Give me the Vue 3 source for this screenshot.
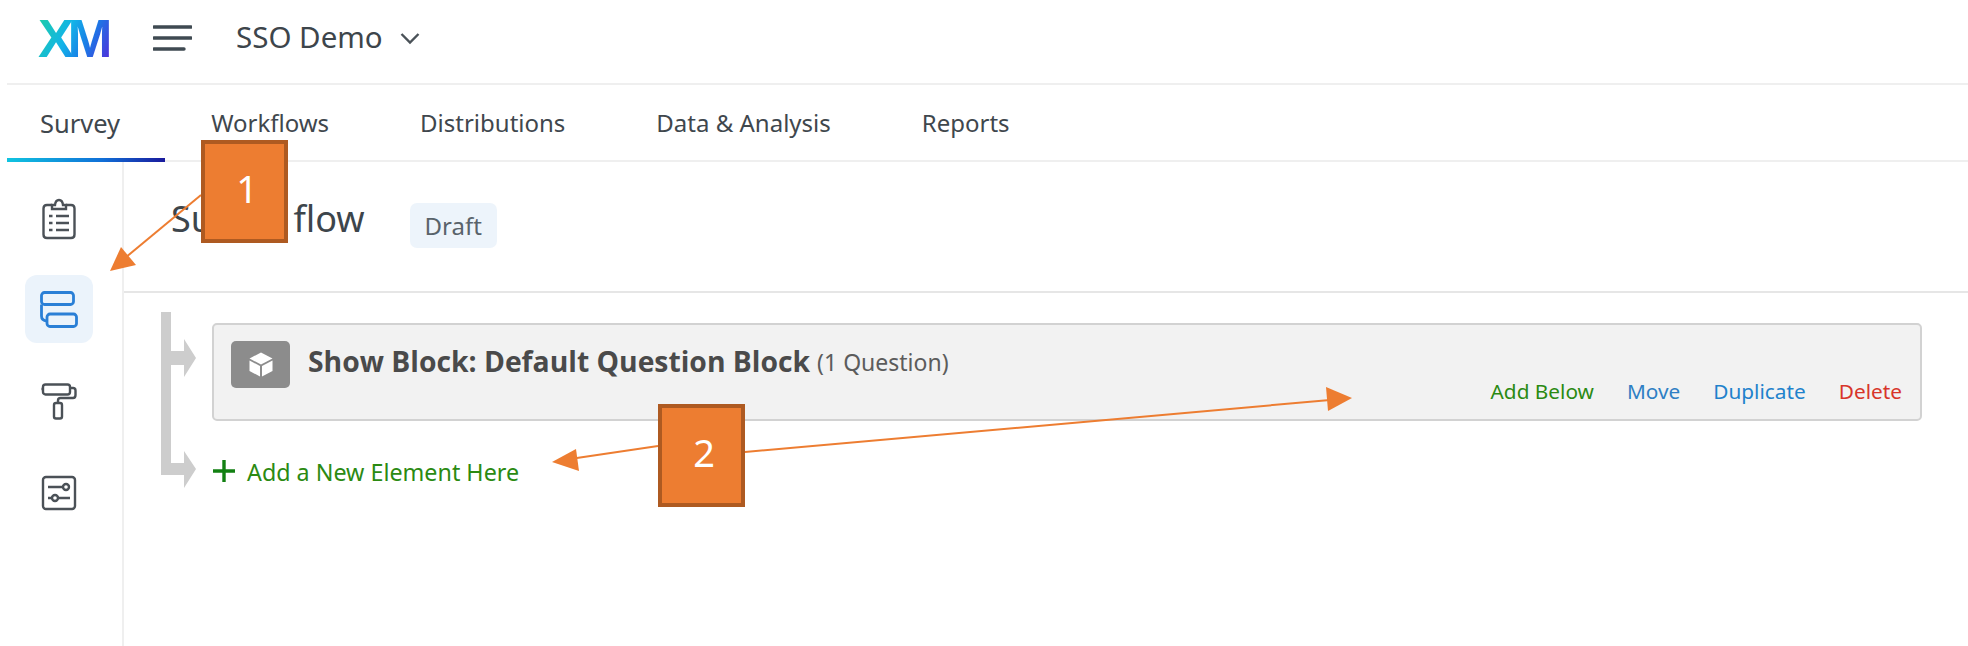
<script setup>
const tabs = ["Survey", "Workflows", "Distributions", "Data & Analysis", "Reports"];
const actions = [
  { label: "Add Below", color: "#2b8a12" },
  { label: "Move", color: "#2f7fc4" },
  { label: "Duplicate", color: "#1f82cc" },
  { label: "Delete", color: "#d8352a" },
];
</script>

<template>
  <div class="page">
    <header class="topbar">
      <span class="logo">XM</span>
      <svg class="menu" width="39" height="28" viewBox="0 0 39 28">
        <path d="M1 3H38M1 14H38M1 25H31" stroke="#3f4a52" stroke-width="3.4" fill="none" stroke-linecap="round" />
      </svg>
      <span class="project">SSO Demo</span>
      <svg class="chevron" width="20" height="13" viewBox="0 0 20 13">
        <path d="M1.5 2L10 10.5L18.5 2" stroke="#4a5258" stroke-width="2.4" fill="none" />
      </svg>
    </header>

    <nav class="tabs">
      <span v-for="(tab, i) in tabs" :key="tab" class="tab" :class="{ active: i === 0 }">{{ tab }}</span>
    </nav>

    <div class="body">
      <aside class="sidebar">
        <div class="side-item">
          <svg class="clipboard" width="34" height="42" viewBox="0 0 34 42" fill="none" stroke="#4b5157" stroke-width="2.4">
            <path d="M10 7H5Q1.500 7 1.500 10.500V36.500Q1.500 40 5 40H29Q32.500 40 32.500 36.500V10.500Q32.500 7 29 7H24" />
            <path d="M10 11V7H13Q13.500 2 17 2Q20.500 2 21 7H24V11Z" />
            <path d="M14 18H27M14 25H27M14 32H27" />
            <path d="M7 18H10.500M7 25H10.500M7 32H10.500" />
          </svg>
        </div>
        <div class="side-item selected">
          <svg width="38" height="37" viewBox="0 0 38 37" fill="none" stroke="#2a7fd6" stroke-width="2.800">
            <rect x="1.500" y="1.500" width="32" height="12" rx="3" />
            <rect x="7" y="23" width="29.500" height="12.500" rx="3" />
            <path d="M1.500 13.500V25Q1.500 29.500 7 30" />
          </svg>
        </div>
        <div class="side-item">
          <svg width="36" height="37" viewBox="0 0 36 37" fill="none" stroke="#4b5157" stroke-width="2.400">
            <rect x="2" y="1.500" width="27" height="10" rx="2.500" />
            <path d="M2 6H0.500M29 5H32Q34.500 5 34.500 7.500V12Q34.500 15 32 15H19.500Q17 15 17 17.500V20" />
            <rect x="13" y="20" width="8" height="15.500" rx="2" />
          </svg>
        </div>
        <div class="side-item">
          <svg width="36" height="36" viewBox="0 0 36 36" fill="none" stroke="#4b5157" stroke-width="2.400">
            <rect x="2" y="2" width="32" height="32" rx="3" />
            <path d="M7 12H22M28 12H29M7 23H11M17 23H29" />
            <circle cx="25" cy="12" r="3" />
            <circle cx="14" cy="23" r="3" />
          </svg>
        </div>
      </aside>

      <main class="main">
        <div class="title-row">
          <h1 class="title">Survey flow</h1>
          <span class="badge">Draft</span>
        </div>

        <div class="flow">
          <svg class="connector" width="36" height="177" viewBox="0 0 36 177">
            <path d="M0 0H10V39H23V27L35 46L23 65V53H10V151H23V139L35 157L23 176V163H0Z" fill="#cdcdcd" />
          </svg>
          <div class="flow-items">
            <section class="block">
              <div class="block-head">
                <span class="block-icon">
                  <svg width="24" height="25" viewBox="0 0 24 25">
                    <path d="M12 0.500L23.500 6.500L12 12.500L0.500 6.500Z" fill="#fff" />
                    <path d="M0.500 8.500L11 14V24.500L0.500 19Z" fill="#fff" />
                    <path d="M23.500 8.500L13 14V24.500L23.500 19Z" fill="#fff" />
                  </svg>
                </span>
                <span class="block-name">Show Block: Default Question Block</span>
                <span class="block-count">(1 Question)</span>
              </div>
              <div class="block-actions">
                <a v-for="a in actions" :key="a.label" :style="{ color: a.color }">{{ a.label }}</a>
              </div>
            </section>
            <div class="add-row">
              <svg class="add-plus" width="22" height="22" viewBox="0 0 22 22">
                <path d="M11 0V22M0 11H22" stroke="#128012" stroke-width="3.400" />
              </svg>
              <span class="add-text">Add a New Element Here</span>
            </div>
          </div>
        </div>
      </main>
    </div>

    <!-- annotations over the screenshot -->
    <svg class="arrows" width="1968" height="646" viewBox="0 0 1968 646">
      <g stroke="#ed7d31" stroke-width="2" fill="#ed7d31">
        <path d="M201 195L125 258" fill="none" />
        <path d="M110 271L121 247L136 265Z" stroke="none" />
        <path d="M658 446L570 459" fill="none" />
        <path d="M552 462L576 449L579 471Z" stroke="none" />
        <path d="M745 452L1330 400" fill="none" />
        <path d="M1352 398L1326 387L1328 411Z" stroke="none" />
      </g>
    </svg>
    <div class="note note-1">1</div>
    <div class="note note-2">2</div>
  </div>
</template>

<style scoped>
.page {
  position: relative;
  width: 1968px;
  height: 646px;
  overflow: hidden;
  background: #fff;
  font-family: "Noto Sans", "Open Sans", sans-serif;
  color: #3f474d;
}
.topbar {
  display: flex;
  align-items: center;
  height: 76px;
  padding-bottom: 7px;
  margin-left: 7px;
  padding-left: 31px;
  border-bottom: 2px solid #efefef;
}
.logo {
  width: 74px;
  font-family: "Liberation Sans", sans-serif;
  font-size: 54px;
  font-weight: 700;
  letter-spacing: -6.500px;
  line-height: 1;
  background: linear-gradient(115deg, #1fd0a0 0%, #12b4e8 40%, #1a7ae6 65%, #5a22d8 100%);
  -webkit-background-clip: text;
  background-clip: text;
  color: transparent;
}
.menu {
  margin-left: 41px;
}
.project {
  margin: 0 0 4px 44px;
  font-size: 29.500px;
  color: #3d454b;
}
.chevron {
  margin-left: 17px;
}
.tabs {
  display: flex;
  gap: 91px;
  height: 75px;
  margin-left: 7px;
  padding-left: 33px;
  border-bottom: 2px solid #efefef;
}
.tab {
  position: relative;
  display: flex;
  align-items: center;
  font-size: 24px;
  color: #3f474d;
}
.tab.active {
  font-size: 25.500px;
}
.tab.active::after {
  content: "";
  position: absolute;
  left: -33px;
  right: -45px;
  bottom: -2px;
  height: 4px;
  background: linear-gradient(90deg, #10c4e0, #1070d8 60%, #1a1a9c);
}
.body {
  display: flex;
  height: 485px;
}
.sidebar {
  width: 122px;
  padding-top: 21px;
  border-right: 2px solid #efefef;
  display: flex;
  flex-direction: column;
  gap: 24px;
}
.side-item {
  display: flex;
  align-items: center;
  justify-content: center;
  width: 68px;
  height: 68px;
  margin-left: 25px;
  border-radius: 12px;
}
.side-item.selected {
  background: #ebf3fb;
}
.clipboard {
  margin-top: 4px;
}
.main {
  flex: 1;
}
.title-row {
  display: flex;
  align-items: center;
  height: 129px;
  padding-left: 47px;
  border-bottom: 2px solid #e6e6e6;
}
.title {
  margin: 0 0 16px;
  font-size: 36px;
  font-weight: 400;
  color: #3d454b;
}
.badge {
  margin: 0 0 3px 45px;
  padding: 6px 15px;
  border-radius: 7px;
  background: #edf4fb;
  font-size: 24px;
  color: #59636b;
}
.flow {
  display: flex;
  padding: 19px 46px 0 37px;
}
.connector {
  flex: none;
}
.flow-items {
  flex: 1;
  margin-left: 15px;
  padding-top: 11px;
}
.block {
  height: 98px;
  box-sizing: border-box;
  border: 2px solid #d2d2d2;
  border-radius: 5px;
  background: #f2f2f2;
  padding: 16px 18px 0 17px;
}
.block-head {
  display: flex;
  align-items: flex-start;
}
.block-icon {
  display: flex;
  align-items: center;
  justify-content: center;
  width: 59px;
  height: 47px;
  border-radius: 5px;
  background: #8c8c8c;
}
.block-name {
  margin-left: 18px;
  margin-top: 1px;
  font-family: "Open Sans", sans-serif;
  font-size: 28.300px;
  font-weight: 700;
  color: #4a4a4a;
}
.block-count {
  margin-left: 7px;
  margin-top: 5px;
  font-size: 23px;
  color: #5c5c5c;
}
.block-actions {
  display: flex;
  justify-content: flex-end;
  gap: 33px;
  margin-top: -7px;
  font-size: 20.800px;
  line-height: 1;
}
.add-row {
  display: flex;
  align-items: center;
  gap: 12px;
  margin-top: 35px;
  margin-left: 1px;
}
.add-plus {
  margin-bottom: 3px;
}
.add-text {
  font-size: 23.300px;
  color: #2b8a12;
}
.arrows {
  position: absolute;
  left: 0;
  top: 0;
}
.note {
  position: absolute;
  width: 87px;
  height: 103px;
  box-sizing: border-box;
  padding: 0 0 8px 5px;
  border: 4px solid #ae5a21;
  background: #ed7d31;
  color: #fff;
  font-size: 38px;
  display: flex;
  align-items: center;
  justify-content: center;
}
.note-1 {
  left: 201px;
  top: 140px;
}
.note-2 {
  left: 658px;
  top: 404px;
}
</style>
